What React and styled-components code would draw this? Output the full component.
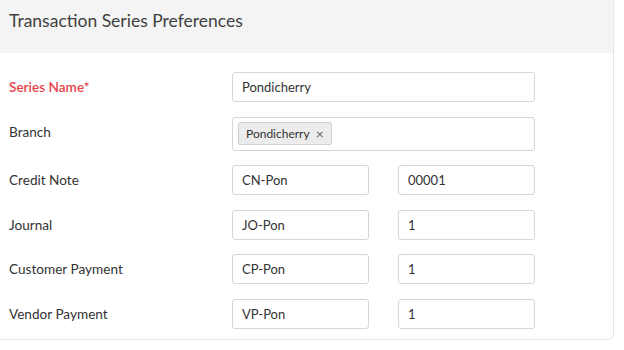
import React from "react";
import styled, { createGlobalStyle } from "styled-components";

const GlobalStyle = createGlobalStyle`
  body {
    margin: 0;
    background: #fff;
    font-family: "Lato", "Open Sans", sans-serif;
    color: #333;
  }
`;

const SCPanel = styled.div`
  width: 614px;
  height: 340px;
  box-sizing: border-box;
  border-right: 1px solid #e6e6f0;
  border-bottom: 1px solid #e6e6f0;
  border-bottom-right-radius: 6px;
  overflow: hidden;
`;

const SCHeader = styled.div`
  height: 53px;
  box-sizing: border-box;
  background: #f4f4f4;
  padding: 10px 0 0 9px;
  font-size: 17.5px;
  line-height: 22px;
  color: #3f3f3f;
`;

const SCBody = styled.div`
  display: flex;
  flex-direction: column;
  gap: 14.5px;
  padding: 19px 0 0 9px;
`;

const SCRow = styled.div`
  display: grid;
  grid-template-columns: 194px 137px 137px;
  column-gap: 29px;
  align-items: center;
  height: ${(props) => (props.tall ? "34px" : "30px")};
`;

const SCLabel = styled.label`
  font-size: 13.6px;
  font-weight: ${(props) => (props.$required ? 600 : 400)};
  color: ${(props) => (props.$required ? "#e5444b" : "#333")};
  margin-top: ${(props) => (props.$tall ? "-3px" : "0")};
`;

const SCInput = styled.div`
  box-sizing: border-box;
  height: ${(props) => (props.tall ? "34px" : "30px")};
  grid-column: ${(props) => (props.wide ? "2 / 4" : "auto")};
  border: 1px solid #d6d6d6;
  border-radius: 3px;
  padding: 0 9px;
  display: flex;
  align-items: center;
  font-size: 13px;
  color: #333;
`;

const SCTag = styled.span`
  display: inline-flex;
  align-items: center;
  gap: 6px;
  height: 23px;
  box-sizing: border-box;
  margin-left: -4px;
  padding: 0 7px;
  background: #ececec;
  border: 1px solid #d0d0d0;
  border-radius: 2px;
  font-size: 12px;
  color: #333;
`;

const SCRemove = styled.span`
  color: #666;
  font-size: 14px;
  line-height: 1;
`;

const series = [
  { label: "Credit Note", prefix: "CN-Pon", start: "00001" },
  { label: "Journal", prefix: "JO-Pon", start: "1" },
  { label: "Customer Payment", prefix: "CP-Pon", start: "1" },
  { label: "Vendor Payment", prefix: "VP-Pon", start: "1" },
];

export default function App() {
  return (
    <>
      <GlobalStyle />
      <SCPanel>
        <SCHeader>Transaction Series Preferences</SCHeader>
        <SCBody>
          <SCRow>
            <SCLabel $required>Series Name*</SCLabel>
            <SCInput wide>Pondicherry</SCInput>
          </SCRow>
          <SCRow tall>
            <SCLabel $tall>Branch</SCLabel>
            <SCInput wide tall>
              <SCTag>
                Pondicherry <SCRemove>×</SCRemove>
              </SCTag>
            </SCInput>
          </SCRow>
          {series.map((s) => (
            <SCRow key={s.label}>
              <SCLabel>{s.label}</SCLabel>
              <SCInput>{s.prefix}</SCInput>
              <SCInput>{s.start}</SCInput>
            </SCRow>
          ))}
        </SCBody>
      </SCPanel>
    </>
  );
}
